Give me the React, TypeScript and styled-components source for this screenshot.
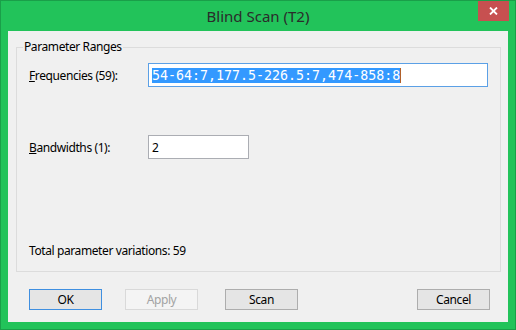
import React from "react";
import styled, { createGlobalStyle } from "styled-components";

const Global = createGlobalStyle`
  html, body { margin: 0; padding: 0; background: #22c35a; }
  body { font-family: "Noto Sans", "Liberation Sans", sans-serif; font-size: 12px; }
`;

const Window = styled.div`
  position: relative;
  box-sizing: border-box;
  width: 516px;
  height: 330px;
  background: #22c35a;
  border: 1px solid #1a9f49;
  display: flex;
  flex-direction: column;
`;

const TitleBar = styled.div`
  height: 30px;
  display: flex;
  align-items: center;
  justify-content: center;
  font-family: "Noto Sans", "Liberation Sans", sans-serif;
  font-size: 15px;
  color: #2b2b2b;
  padding-bottom: 1px;
  box-sizing: border-box;
`;

const CloseButton = styled.div`
  position: absolute;
  top: 0;
  right: 6px;
  width: 31px;
  height: 20px;
  background: #c75050;
  display: flex;
  align-items: center;
  justify-content: center;
`;

const Client = styled.div`
  flex: 1;
  margin: 0 7px 7px 7px;
  background: #f0f0f0;
  display: flex;
  flex-direction: column;
  padding: 9px 7px 0 8px;
  letter-spacing: -0.4px;
`;

const Group = styled.fieldset`
  margin: 0;
  height: 232px;
  box-sizing: border-box;
  border: 1px solid #dcdcdc;
  padding: 9px 12px 0 12px;
`;

const Legend = styled.legend`
  padding: 0 1px;
  margin-left: -6px;
  color: #000;
  font-size: 12px;
  line-height: 14px;
`;

const Row = styled.div<{ $gap?: number }>`
  display: grid;
  grid-template-columns: 119px 1fr;
  align-items: center;
  margin-top: ${(p) => p.$gap ?? 0}px;
`;

const Label = styled.span`
  color: #000;
  font-size: 12px;
  padding-top: 1px;
`;

const TextBox = styled.div<{ $focused?: boolean; $width?: number }>`
  box-sizing: border-box;
  height: 24px;
  width: ${(p) => (p.$width ? `${p.$width}px` : "auto")};
  background: #fff;
  border: 1px solid ${(p) => (p.$focused ? "#5ba0e6" : "#abadb3")};
  display: flex;
  align-items: center;
  padding-left: 3px;
  color: #000;
  font-size: 12px;
`;

const Selected = styled.span`
  background: #3399ff;
  color: #fff;
  font-family: "DejaVu Sans Mono", "Liberation Mono", monospace;
  font-size: 13.3px;
  letter-spacing: 0;
  line-height: 15px;
  white-space: pre;
`;

const Caret = styled.span`
  width: 1px;
  height: 15px;
  background: #b0602a;
`;

const Total = styled.div`
  color: #000;
  font-size: 12px;
  line-height: 16px;
  margin-top: 84px;
`;

const ButtonRow = styled.div`
  display: flex;
  align-items: center;
  padding: 17px 11px 0 13px;
`;

const Button = styled.div<{ $variant?: "default" | "disabled" | "normal"; $ml?: string }>`
  box-sizing: border-box;
  width: 73px;
  height: 21px;
  display: flex;
  align-items: center;
  justify-content: center;
  font-size: 12px;
  margin-left: ${(p) => p.$ml ?? "0"};
  background: ${(p) => (p.$variant === "disabled" ? "#f4f4f4" : "#e5e5e5")};
  color: ${(p) => (p.$variant === "disabled" ? "#a3a3a3" : "#000")};
  border: 1px solid
    ${(p) =>
      p.$variant === "default" ? "#3f8fe0" : p.$variant === "disabled" ? "#d9d9d9" : "#adadad"};
`;

export default function App() {
  return (
    <>
      <Global />
      <Window>
        <TitleBar>Blind Scan (T2)</TitleBar>
        <CloseButton>
          <svg width="9" height="8" viewBox="0 0 9 8">
            <path d="M1 0.5 L8 7.5 M8 0.5 L1 7.5" stroke="#fff" strokeWidth="1.8" />
          </svg>
        </CloseButton>
        <Client>
          <Group>
            <Legend>Parameter Ranges</Legend>
            <Row $gap={0}>
              <Label>
                <u>F</u>requencies (59):
              </Label>
              <TextBox $focused>
                <Selected>54-64:7,177.5-226.5:7,474-858:8</Selected>
                <Caret />
              </TextBox>
            </Row>
            <Row $gap={48}>
              <Label>
                <u>B</u>andwidths (1):
              </Label>
              <TextBox $width={101}>2</TextBox>
            </Row>
            <Total>Total parameter variations: 59</Total>
          </Group>
          <ButtonRow>
            <Button $variant="default">OK</Button>
            <Button $variant="disabled" $ml="23px">Apply</Button>
            <Button $variant="normal" $ml="27px">Scan</Button>
            <Button $variant="normal" $ml="auto">Cancel</Button>
          </ButtonRow>
        </Client>
      </Window>
    </>
  );
}
